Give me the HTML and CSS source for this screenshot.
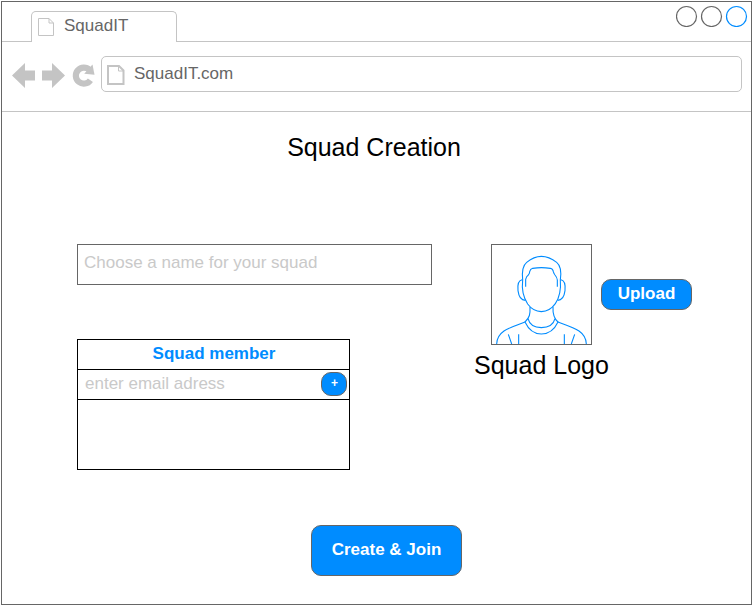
FILE: index.html
```html
<!DOCTYPE html>
<html lang="en">
<head>
<meta charset="utf-8">
<title>SquadIT</title>
<link rel="stylesheet" href="styles.css">
</head>
<body>
<div class="window">
  <header class="tabbar">
    <div class="tab">
      <svg class="tab-icon" width="18" height="20" viewBox="0 0 18 20"><path d="M1.5 1.5H12L16.500 6V18.500H1.500ZM12 1.500V6H16.500"/></svg>
      <span>SquadIT</span>
    </div>
    <div class="controls">
      <svg width="72" height="22" viewBox="0 0 72 22"><circle cx="10.500" cy="11.500" r="10"/><circle cx="35.500" cy="11.500" r="10"/><circle class="active" cx="60.500" cy="11.500" r="10"/></svg>
    </div>
  </header>
  <nav class="toolbar">
    <svg class="nav-icons" width="86" height="28" viewBox="0 0 86 28">
      <path class="solid" d="M0 13.500L13 1V8.500H23V18.500H13V26ZM53 13.500L40 1V8.500H30V18.500H40V26Z"/>
      <path class="reload" d="M78.400 18.200A8 8 0 1 1 77.500 8"/>
      <path class="solid" d="M80.500 2.500L82.500 12.700L72.200 11.700Z"/>
    </svg>
    <div class="address">
      <svg class="page-icon" width="20" height="22" viewBox="0 0 20 22"><path d="M2 2H13L17.500 6.500V20H2Z"/><path class="thin" d="M12.500 2V7H18"/></svg>
      <span>SquadIT.com</span>
    </div>
  </nav>
  <main class="page">
    <h1 class="heading">Squad Creation</h1>
    <div class="columns">
      <section class="details">
        <input class="name" type="text" placeholder="Choose a name for your squad">
        <div class="members">
          <div class="members-title">Squad member</div>
          <div class="member-row"><span>enter email adress</span><button class="btn add">+</button></div>
        </div>
      </section>
      <section class="logo">
        <div class="logo-row">
          <svg class="avatar" viewBox="21 21 297 297">
            <path d="M113 126C110 98 115 81 125 73Q147 55 169 55Q192 55 215 73C225 81 230 99 226 126C228 151 224 178 211 197Q195 220 169 221Q144 220 128 198C115 178 110 151 113 126Z"/>
            <path d="M122 146V124Q124 115 130 111Q134 106 134 101Q136 93 143 91Q169 87 196 91Q204 93 205 101Q206 106 210 111Q216 118 217 126V146"/>
            <path d="M111 125C101 127 97 139 99 158C101 174 106 187 121 187M228 125C238 127 242 139 240 158C238 174 233 187 218 187"/>
            <path d="M135 207C136 228 134 239 120 252Q137 288 169 288Q202 288 219 252C205 240 203 226 204 207"/>
            <path d="M129 242Q136 269 169 269Q203 269 210 242M120 252C77 268 36 278 35 318M219 252C262 268 303 278 304 318M70 289L80 318M269 289L259 318M101 289V318M238 289V318"/>
          </svg>
          <button class="btn upload">Upload</button>
        </div>
        <h2 class="heading caption">Squad Logo</h2>
      </section>
    </div>
    <button class="btn create">Create &amp; Join</button>
  </main>
</div>
</body>
</html>
```
FILE: styles.css
```css
* { box-sizing: border-box; }
body {
  margin: 0;
  padding: 1px;
  background: #fff;
  color: #666;
  font: 17px/20px "Liberation Sans", Arial, sans-serif;
}
svg { display: block; flex: none; fill: none; }
.window {
  width: 751px;
  height: 604px;
  border: 1px solid #666;
}
.tabbar {
  display: flex;
  justify-content: space-between;
  height: 40px;
  padding-left: 29px;
  border-bottom: 1px solid #c4c4c4;
}
.tab {
  display: flex;
  width: 146px;
  height: 31px;
  margin-top: 9px;
  padding: 4px 0 0 5px;
  gap: 9px;
  border: 1px solid #c4c4c4;
  border-bottom: 0;
  border-radius: 5px 5px 0 0;
  background: #fff;
}
.tab-icon { margin-top: 1px; stroke: #c4c4c4; }
.controls { padding: 3px 0 0; margin-right: 3px; }
.controls svg { stroke: #666; stroke-width: 1.2; }
.controls .active { stroke: #008cff; }
.toolbar {
  display: flex;
  height: 70px;
  padding: 14px 9px 0 10px;
  border-bottom: 1px solid #c4c4c4;
}
.nav-icons { margin: 6px 3px 0 0; }
.solid { fill: #c4c4c4; }
.reload { stroke: #c4c4c4; stroke-width: 6.2; }
.address {
  display: flex;
  flex: 1;
  height: 36px;
  padding: 7px 0 0 4px;
  gap: 8px;
  border: 1px solid #c4c4c4;
  border-radius: 5px;
}
.page-icon { stroke: #c4c4c4; stroke-width: 2; }
.page-icon .thin { stroke-width: 1; }
.page {
  display: flex;
  flex-direction: column;
  align-items: center;
}
.heading {
  margin: 0;
  color: #000;
  font-size: 25px;
  font-weight: normal;
  line-height: 30px;
}
.page > .heading { margin: 20px 5px 0 0; }
.columns {
  display: flex;
  align-self: stretch;
  justify-content: space-between;
  margin-top: 82px;
  padding: 0 59px 0 75px;
}
.details { width: 355px; }
.name {
  display: block;
  width: 100%;
  height: 41px;
  padding: 0 6px 4px;
  border: 1px solid #666;
  border-radius: 0;
  background: #fff;
  font: inherit;
}
.name::placeholder { color: #c9c9c9; opacity: 1; }
.members {
  width: 273px;
  height: 131px;
  margin-top: 54px;
  border: 1px solid #000;
}
.members-title {
  height: 30px;
  padding: 4px 0 0 1px;
  border-bottom: 1px solid #000;
  color: #008cff;
  font-weight: bold;
  text-align: center;
}
.member-row {
  display: flex;
  justify-content: space-between;
  height: 30px;
  padding: 2px 2px 0 7px;
  border-bottom: 1px solid #000;
  color: #c9c9c9;
}
.member-row span { padding-top: 2px; }
.btn {
  display: flex;
  align-items: center;
  justify-content: center;
  border: 1px solid #666;
  border-radius: 10px;
  background: #008cff;
  color: #fff;
  font: bold 17px/20px "Liberation Sans", Arial, sans-serif;
}
.add {
  width: 26px;
  height: 24px;
  padding: 0 0 2px 1px;
  font-size: 12px;
}
.logo { width: 218px; }
.logo-row { display: flex; justify-content: flex-end; gap: 9px; }
.avatar {
  width: 101px;
  height: 101px;
  border: 1px solid #666;
  stroke: #008cff;
  stroke-width: 3.3;
}
.upload {
  width: 91px;
  height: 31px;
  margin-top: 35px;
  padding: 0 0 2px;
}
.caption { margin-top: 5px; }
.create {
  width: 151px;
  height: 51px;
  margin: 55px 0 0 20px;
  padding: 0 0 2px;
}
```
